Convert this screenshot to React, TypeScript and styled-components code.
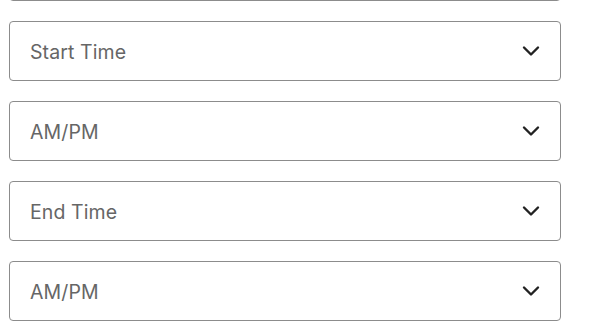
import React from "react";
import styled, { createGlobalStyle } from "styled-components";

const GlobalStyle = createGlobalStyle`
  html, body {
    margin: 0;
    padding: 0;
    background: #ffffff;
    overflow: hidden;
  }
`;

const Form = styled.div`
  display: flex;
  flex-direction: column;
  gap: 20px;
  width: 552px;
  margin-left: 9px;
  margin-top: -59px;
`;

const SelectBox = styled.div`
  box-sizing: border-box;
  height: 60px;
  border: 1px solid #8c8c8c;
  border-radius: 4px;
  background: #fff;
  display: flex;
  align-items: center;
  justify-content: space-between;
  padding: 0 20px;
  font-family: Inter, "Noto Sans", sans-serif;
  font-size: 19.5px;
  color: #666666;
`;

const Label = styled.span`
  letter-spacing: 0.1px;
  padding-top: 1px;
`;

const Chevron = () => (
  <svg width="18" height="12" viewBox="0 0 18 12" fill="none">
    <path
      d="M2 2.5 L9 9.5 L16 2.5"
      stroke="#222"
      strokeWidth="2.4"
      strokeLinecap="round"
      strokeLinejoin="round"
    />
  </svg>
);

const fields = ["", "Start Time", "AM/PM", "End Time", "AM/PM"];

export default function App() {
  return (
    <>
      <GlobalStyle />
      <Form>
        {fields.map((label, i) => (
          <SelectBox key={i}>
            <Label>{label}</Label>
            <Chevron />
          </SelectBox>
        ))}
      </Form>
    </>
  );
}
